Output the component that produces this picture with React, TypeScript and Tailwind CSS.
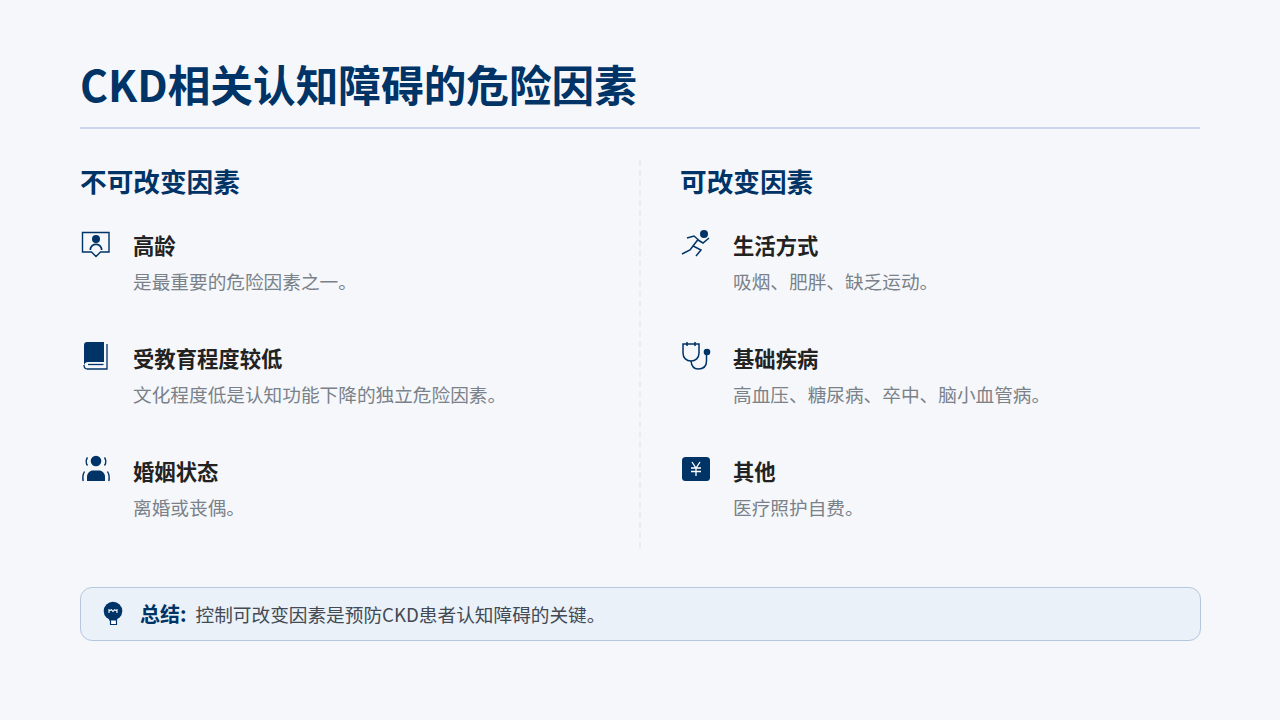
import { ReactNode } from "react";

const NAVY = "#003366";

function Screen() {
  return (
    <svg width="32" height="30" viewBox="0 0 32 30" fill="none">
      <path d="M2.500 4.500H29V24H20.500L16 28.500L11.500 24H2.500Z" stroke={NAVY} strokeWidth="1.400" />
      <circle cx="16" cy="11" r="4" fill={NAVY} />
      <path d="M9.500 22C9.500 18 12.500 15.500 16 15.500C19.500 15.500 22.500 18 22.500 22H20.800C20.800 19 18.500 17.300 16 17.300C13.500 17.300 11.200 19 11.200 22Z" fill={NAVY} />
    </svg>
  );
}

function Book() {
  return (
    <svg width="32" height="30" viewBox="0 0 32 30" fill="none">
      <path d="M7 1H24V21H8C6 21 4 22.500 4 25V4C4 2.300 5.300 1 7 1Z" fill={NAVY} />
      <path d="M4 24C4 26.500 5.500 28 7.500 28H27V3" stroke={NAVY} strokeWidth="1.300" />
      <path d="M8 23.500H23.500" stroke={NAVY} strokeWidth="1.300" />
    </svg>
  );
}

function Person() {
  return (
    <svg width="32" height="30" viewBox="0 0 32 30" fill="none">
      <circle cx="16" cy="7" r="5.300" fill={NAVY} />
      <path d="M7 27V23C7 19 10 16.500 13 16.500H19C22 16.500 25 19 25 23V27Z" fill={NAVY} />
      <path d="M7.500 3.500C5.800 6 5.800 9 7.500 11.500M24.500 3.500C26.200 6 26.200 9 24.500 11.500M4.500 17.500C2.800 20.500 2.500 24 3.200 27M27.500 17.500C29.200 20.500 29.500 24 28.800 27" stroke={NAVY} strokeWidth="1.400" />
    </svg>
  );
}

function Runner() {
  return (
    <svg width="32" height="30" viewBox="0 0 32 30" fill="none">
      <circle cx="24" cy="6" r="4" fill={NAVY} />
      <path
        d="M7 10L14 8L18 11.500L13 18L21 22L16 28M13 18L10 22L2 26M18 12L23 15L29 10"
        stroke={NAVY}
        strokeWidth="1.500"
      />
    </svg>
  );
}

function Stethoscope() {
  return (
    <svg width="32" height="30" viewBox="0 0 32 30" fill="none">
      <path d="M3 3H19V12C19 17 15.500 20 11 20C6.500 20 3 17 3 12Z" stroke={NAVY} strokeWidth="1.500" />
      <path d="M7 1V5M15 1V5" stroke={NAVY} strokeWidth="1.500" />
      <path d="M11 20C11.500 25 13.500 28 18 28C23 28 26.500 26 26.500 20V13" stroke={NAVY} strokeWidth="1.500" />
      <circle cx="27" cy="11" r="3.300" fill={NAVY} />
    </svg>
  );
}

function Yen() {
  return (
    <svg width="32" height="30" viewBox="0 0 32 30" fill="none">
      <rect x="2" y="3" width="28" height="24" rx="3.500" fill={NAVY} />
      <path d="M12 8L16 14L20 8M16 14V22M11 14H21M11 17.500H21" stroke="white" strokeWidth="1.300" />
    </svg>
  );
}

function Bulb() {
  return (
    <svg width="24" height="30" viewBox="0 0 24 30" fill="none">
      <circle cx="11" cy="12" r="9.300" fill={NAVY} />
      <path d="M8.500 20V25.500H14.500V20" stroke={NAVY} strokeWidth="1.200" fill="white" />
      <path d="M7 19H15V21.500H7Z" fill={NAVY} />
      <path d="M7 10V14M15 10V14M7 12L9.500 10.800L11 12.500L12.500 10.800L15 12" stroke="white" strokeWidth="1.100" />
    </svg>
  );
}

type Factor = { icon: ReactNode; title: string; desc: string };

const fixedFactors: Factor[] = [
  { icon: <Screen />, title: "高龄", desc: "是最重要的危险因素之一。" },
  { icon: <Book />, title: "受教育程度较低", desc: "文化程度低是认知功能下降的独立危险因素。" },
  { icon: <Person />, title: "婚姻状态", desc: "离婚或丧偶。" },
];

const changeableFactors: Factor[] = [
  { icon: <Runner />, title: "生活方式", desc: "吸烟、肥胖、缺乏运动。" },
  { icon: <Stethoscope />, title: "基础疾病", desc: "高血压、糖尿病、卒中、脑小血管病。" },
  { icon: <Yen />, title: "其他", desc: "医疗照护自费。" },
];

function FactorRow({ factor }: { factor: Factor }) {
  return (
    <div className="flex h-[113px]">
      <div className="w-[53px] shrink-0 pt-[1px]">{factor.icon}</div>
      <div>
        <h3 className="text-[21.33px] leading-[32px] font-bold text-[#222222] mt-[2px]">{factor.title}</h3>
        <p className="text-[18.67px] leading-[28px] text-[#7a8188] mt-[6px]">{factor.desc}</p>
      </div>
    </div>
  );
}

export default function App() {
  return (
    <div
      className="w-[1280px] h-[720px] bg-[#f5f7fb] px-[80px] pt-[49px] overflow-hidden"
      style={{ fontFamily: '"Noto Sans CJK SC", "Noto Sans", sans-serif' }}
    >
      <h1 className="h-[80px] border-b-2 border-[#cdd6ec] text-[42.67px] leading-[70px] font-bold text-[#003366]">
        CKD相关认知障碍的危险因素
      </h1>
      <div className="flex mt-[31px] h-[388px]">
        <div className="w-[561px] border-r-2 border-dashed border-[#e9ecf3] pr-[40px]">
          <h2 className="text-[26.67px] leading-[44px] font-bold text-[#003366] mb-[24px] -mt-[1px]">不可改变因素</h2>
          {fixedFactors.map((f) => (
            <FactorRow key={f.title} factor={f} />
          ))}
        </div>
        <div className="flex-1 pl-[39px]">
          <h2 className="text-[26.67px] leading-[44px] font-bold text-[#003366] mb-[24px] -mt-[1px]">可改变因素</h2>
          {changeableFactors.map((f) => (
            <FactorRow key={f.title} factor={f} />
          ))}
        </div>
      </div>
      <div className="mt-[39px] mr-[-1px] h-[54px] flex items-center rounded-[12px] border border-[#b6c6dc] bg-[#eaf1f9] pl-[21px]">
        <Bulb />
        <span className="ml-[14px] text-[20px] font-bold text-[#003366]">总结:</span>
        <span className="ml-[9px] text-[18.67px] text-[#434a54]">控制可改变因素是预防CKD患者认知障碍的关键。</span>
      </div>
    </div>
  );
}
